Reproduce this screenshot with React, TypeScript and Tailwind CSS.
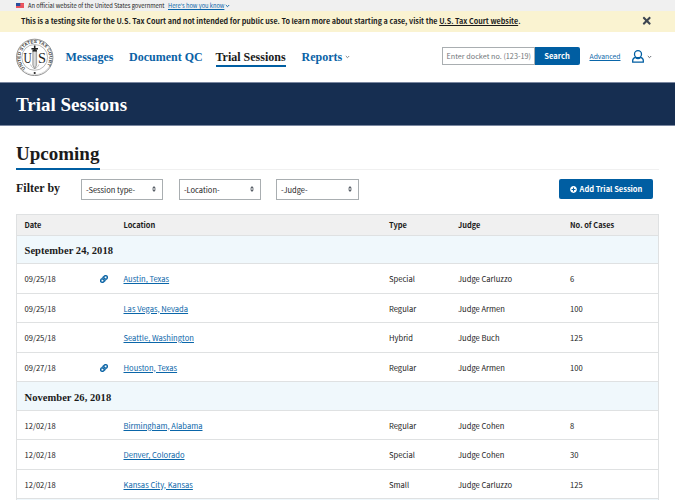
import React from "react";
import { FaLink, FaPlusCircle, FaTimes } from "react-icons/fa";

const serif = "font-['Liberation_Serif','DejaVu_Serif',serif] font-bold";

function Seal() {
  return (
    <svg width="38" height="38" viewBox="0 0 38 38" className="shrink-0" aria-label="United States Tax Court">
      <defs>
        <path id="ring" d="M9.5 30.3 A14.3 14.3 0 1 1 28.1 30.3" />
      </defs>
      <circle cx="18.7" cy="19.4" r="18.2" fill="#fff" stroke="#777" strokeWidth="0.8" />
      <circle cx="18.7" cy="19.4" r="17.2" fill="none" stroke="#bbb" strokeWidth="0.5" />
      <circle cx="18.7" cy="19.4" r="12.9" fill="#fff" stroke="#888" strokeWidth="0.6" />
      <text fontSize="4.6" fontWeight="700" fill="#444" className="font-['Liberation_Sans',sans-serif]">
        <textPath href="#ring" textLength="65" lengthAdjust="spacing">UNITED STATES TAX COURT</textPath>
      </text>
      <text x="7.6" y="25" fontSize="14.5" fill="#222" textLength="8.2" lengthAdjust="spacingAndGlyphs" className="font-['Liberation_Serif',serif]">U</text>
      <text x="22" y="25" fontSize="14.5" fill="#222" textLength="8" lengthAdjust="spacingAndGlyphs" className="font-['Liberation_Serif',serif]">S</text>
      <path d="M16.8 13h3.8v14l-1.9 4-1.9-4z" fill="#ccc" stroke="#777" strokeWidth="0.6" />
      <path d="M18.7 13v15" stroke="#eee" strokeWidth="0.7" />
      <path d="M15.4 10.8h6.6M18.7 7.6v5.5M16.5 12.6h4.4" stroke="#222" strokeWidth="1.6" />
      <path d="M14.5 26.5c1 2.6 2.6 3.6 4.2 4.2 1.6-.6 3.2-1.6 4.2-4.2" fill="none" stroke="#999" strokeWidth="0.6" />
      <circle cx="18.7" cy="35" r="1.1" fill="#222" />
    </svg>
  );
}

function Flag() {
  return (
    <svg width="8" height="5" viewBox="0 0 8 5" className="shrink-0">
      <path fill="#ea4b55" d="M0 0h8v5H0z" />
      <path stroke="#f0858b" strokeWidth="0.3" d="M0 1.5h8M0 2.8h8M0 4.2h8" />
      <path fill="#274d9c" d="M0 0h4.3v3H0z" />
    </svg>
  );
}

function Chevron({ className }: { className: string }) {
  return (
    <svg width="5" height="4" viewBox="0 0 5 4" className={`shrink-0 ${className}`} fill="none" stroke="currentColor" strokeWidth="0.9">
      <path d="M0.8 1l1.7 1.7L4.2 1" />
    </svg>
  );
}

function Select({ label, className }: { label: string; className: string }) {
  return (
    <div className={`flex h-[21px] items-center justify-between border border-[#a9aeb1] bg-white pr-[6px] pl-[4px] ${className}`}>
      <span className="text-[7.5px] leading-[10px]">{label}</span>
      <svg width="4" height="6" viewBox="0 0 4 6" className="-mt-px" fill="#565c65">
        <path d="M2 0l2 2.5H0zM2 6l2-2.5H0z" />
      </svg>
    </div>
  );
}

const columns = "grid grid-cols-[98.5px_266px_69px_112px_1fr] items-center border-b border-[#dfe1e2] pl-[7.5px]";

interface Session {
  date: string;
  linked?: boolean;
  city: string;
  type: string;
  judge: string;
  cases: number;
  height: string;
}

function Row({ s }: { s: Session }) {
  return (
    <div className={`${columns} pt-px ${s.height}`}>
      <div className="flex items-center justify-between pr-[15.5px]">
        <span>{s.date}</span>
        {s.linked && <FaLink className="stroke-[#005ea2] stroke-[24px] text-[8px] text-[#005ea2]" />}
      </div>
      <a className="pl-[0.5px] text-[#0a66a9] underline">{s.city}</a>
      <span>{s.type}</span>
      <span>{s.judge}</span>
      <span>{s.cases}</span>
    </div>
  );
}

function Group({ title, height }: { title: string; height: string }) {
  return (
    <div className={`flex items-center border-b border-[#dfe1e2] bg-[#f0f8fc] pt-[3px] pl-[7.5px] text-[10.5px] tracking-[0.05px] ${serif} ${height}`}>
      {title}
    </div>
  );
}

const september: Session[] = [
  { date: "09/25/18", linked: true, city: "Austin, Texas", type: "Special", judge: "Judge Carluzzo", cases: 6, height: "h-[30px]" },
  { date: "09/25/18", city: "Las Vegas, Nevada", type: "Regular", judge: "Judge Armen", cases: 100, height: "h-[29px]" },
  { date: "09/25/18", city: "Seattle, Washington", type: "Hybrid", judge: "Judge Buch", cases: 125, height: "h-[30px]" },
  { date: "09/27/18", linked: true, city: "Houston, Texas", type: "Regular", judge: "Judge Armen", cases: 100, height: "h-[29px]" },
];

const november: Session[] = [
  { date: "12/02/18", city: "Birmingham, Alabama", type: "Regular", judge: "Judge Cohen", cases: 8, height: "h-[29px]" },
  { date: "12/02/18", city: "Denver, Colorado", type: "Special", judge: "Judge Cohen", cases: 30, height: "h-[30px]" },
  { date: "12/02/18", city: "Kansas City, Kansas", type: "Small", judge: "Judge Carluzzo", cases: 125, height: "h-[29px]" },
];

export default function App() {
  return (
    <div className="h-[500px] w-[675px] overflow-hidden bg-white font-['Noto_Sans_CJK_SC',sans-serif] text-[7.6px] leading-[12px] text-[#1b1b1b]">
      <div className="flex h-[11px] items-center bg-[#f0f0f0] pl-[16px] text-[5.75px] leading-[11px]">
        <Flag />
        <span className="ml-[4px] w-[140px] whitespace-nowrap">An official website of the United States government</span>
        <a className="whitespace-nowrap text-[5.7px] text-[#0a66a9] underline">Here's how you know</a>
        <Chevron className="ml-px text-[#005ea2]" />
      </div>
      <div className="flex h-[21px] items-center justify-between bg-[#faf3d1] pr-[23px] pl-[21px] text-[7.18px] font-bold">
        <span className="-mt-px whitespace-nowrap">
          This is a testing site for the U.S. Tax Court and not intended for public use. To learn more about starting a case, visit the{" "}
          <a className="underline">U.S. Tax Court website</a>.
        </span>
        <FaTimes className="-mt-px text-[11.5px] text-[#3d4551]" />
      </div>
      <header className="flex h-[50px] items-center pl-[16px]">
        <Seal />
        <nav className={`ml-[11.5px] flex items-center text-[12px] leading-[16px] text-[#0a62a6] ${serif}`}>
          <span className="w-[63.5px]">Messages</span>
          <span className="w-[86.5px]">Document QC</span>
          <span className="mt-[2px] w-[70px] whitespace-nowrap border-b-2 border-[#005ea2] text-[#1b1b1b]">Trial Sessions</span>
          <span className="ml-[16px]">Reports</span>
          <Chevron className="ml-[3px] text-[#71767a]" />
        </nav>
        <div className="ml-auto flex shrink-0 items-center pr-[23.5px] pb-[2px]">
          <div className="flex h-[18px] w-[93px] shrink-0 items-center whitespace-nowrap border border-[#a9aeb1] pl-[4px] text-[7.25px] text-[#71767a]">Enter docket no. (123-19)</div>
          <div className="flex h-[18px] w-[45px] shrink-0 items-center justify-center rounded-r-[2px] bg-[#005ea2] font-bold text-white">Search</div>
          <a className="ml-[10px] w-[31px] text-[6.8px] text-[#0a66a9] underline">Advanced</a>
          <svg width="12" height="13" viewBox="0 0 12 13" className="ml-[11px] shrink-0" fill="none" stroke="#005ea2" strokeWidth="1.3">
            <circle cx="6" cy="4.2" r="3.5" />
            <path d="M3.4 7.4C1.7 7.9.7 8.9.7 10.5v1.7h10.6v-1.7c0-1.6-1-2.6-2.7-3.1M3.4 7.5c1.4 1.1 3.8 1.1 5.2 0" />
          </svg>
          <Chevron className="ml-[3px] mt-[2px] text-[#565c65]" />
        </div>
      </header>
      <div className={`flex h-[44px] items-center border-t border-b border-[#7a87a0] bg-[#162e51] pt-[2px] pl-[16px] text-[19px] text-white ${serif}`}>
        Trial Sessions
      </div>
      <main className="px-[16px] pt-[17px]">
        <div className="flex h-[27px] border-b border-[#f0f0f0]">
          <h1 className={`h-[27px] w-[84px] border-b-2 border-[#005ea2] text-[19px] leading-[22px] ${serif}`}>Upcoming</h1>
        </div>
        <div className="flex h-[44px] items-start pt-[9px]">
          <span className={`w-[65px] text-[12px] leading-[19px] ${serif}`}>Filter by</span>
          <Select label="-Session type-" className="w-[82px]" />
          <Select label="-Location-" className="ml-[16px] w-[82px]" />
          <Select label="-Judge-" className="ml-[15px] w-[83px]" />
          <div className="mr-[6px] ml-auto flex h-[20px] w-[94px] items-center justify-center gap-[3px] rounded-[2px] bg-[#005ea2] text-[7.5px] font-bold text-white">
            <FaPlusCircle className="text-[7px]" />
            Add Trial Session
          </div>
        </div>
        <div className="border border-b-0 border-[#dfe1e2]">
          <div className={`${columns} h-[21px] bg-[#f0f0f0] text-[7.45px] font-bold`}>
            <span>Date</span>
            <span className="pl-[0.5px]">Location</span>
            <span>Type</span>
            <span>Judge</span>
            <span>No. of Cases</span>
          </div>
          <Group title="September 24, 2018" height="h-[28px]" />
          {september.map((s) => <Row key={s.city} s={s} />)}
          <Group title="November 26, 2018" height="h-[29px]" />
          {november.map((s) => <Row key={s.city} s={s} />)}
          <div className="h-[2px] bg-[#f0f8fc]" />
        </div>
      </main>
    </div>
  );
}
